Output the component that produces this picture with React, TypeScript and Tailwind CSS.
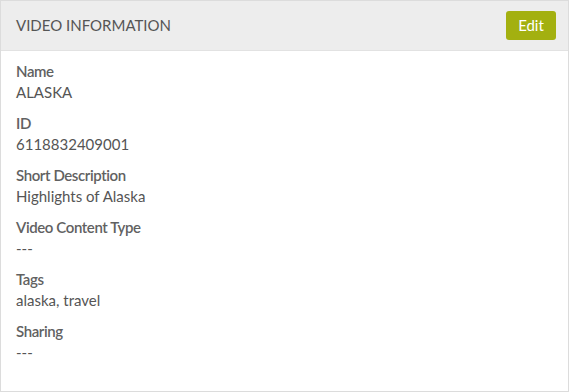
export default function App() {
  const items: [string, string][] = [
    ["Name", "ALASKA"],
    ["ID", "6118832409001"],
    ["Short Description", "Highlights of Alaska"],
    ["Video Content Type", "---"],
    ["Tags", "alaska, travel"],
    ["Sharing", "---"],
  ];
  return (
    <div
      className="w-[569px] h-[392px] bg-white border border-[#dcdcdc] flex flex-col text-[#555555]"
      style={{ fontFamily: "Lato, 'Noto Sans', sans-serif" }}
    >
      <div className="h-[50px] shrink-0 bg-[#ededed] border-b border-[#e2e2e2] flex items-center justify-between pl-[15px] pr-[12px]">
        <span className="text-[15px]">VIDEO INFORMATION</span>
        <button className="h-[29px] w-[50px] rounded-[3px] bg-[#a3b010] text-white text-[15px]">
          Edit
        </button>
      </div>
      <div className="flex flex-col gap-[10px] pt-[10px] pl-[15px]">
        {items.map(([label, value]) => (
          <div key={label} className="flex flex-col">
            <span className="text-[15px] leading-[21px] font-semibold tracking-[-0.4px] text-[#616161]">{label}</span>
            <span className="text-[15px] leading-[21px]">{value}</span>
          </div>
        ))}
      </div>
    </div>
  );
}
